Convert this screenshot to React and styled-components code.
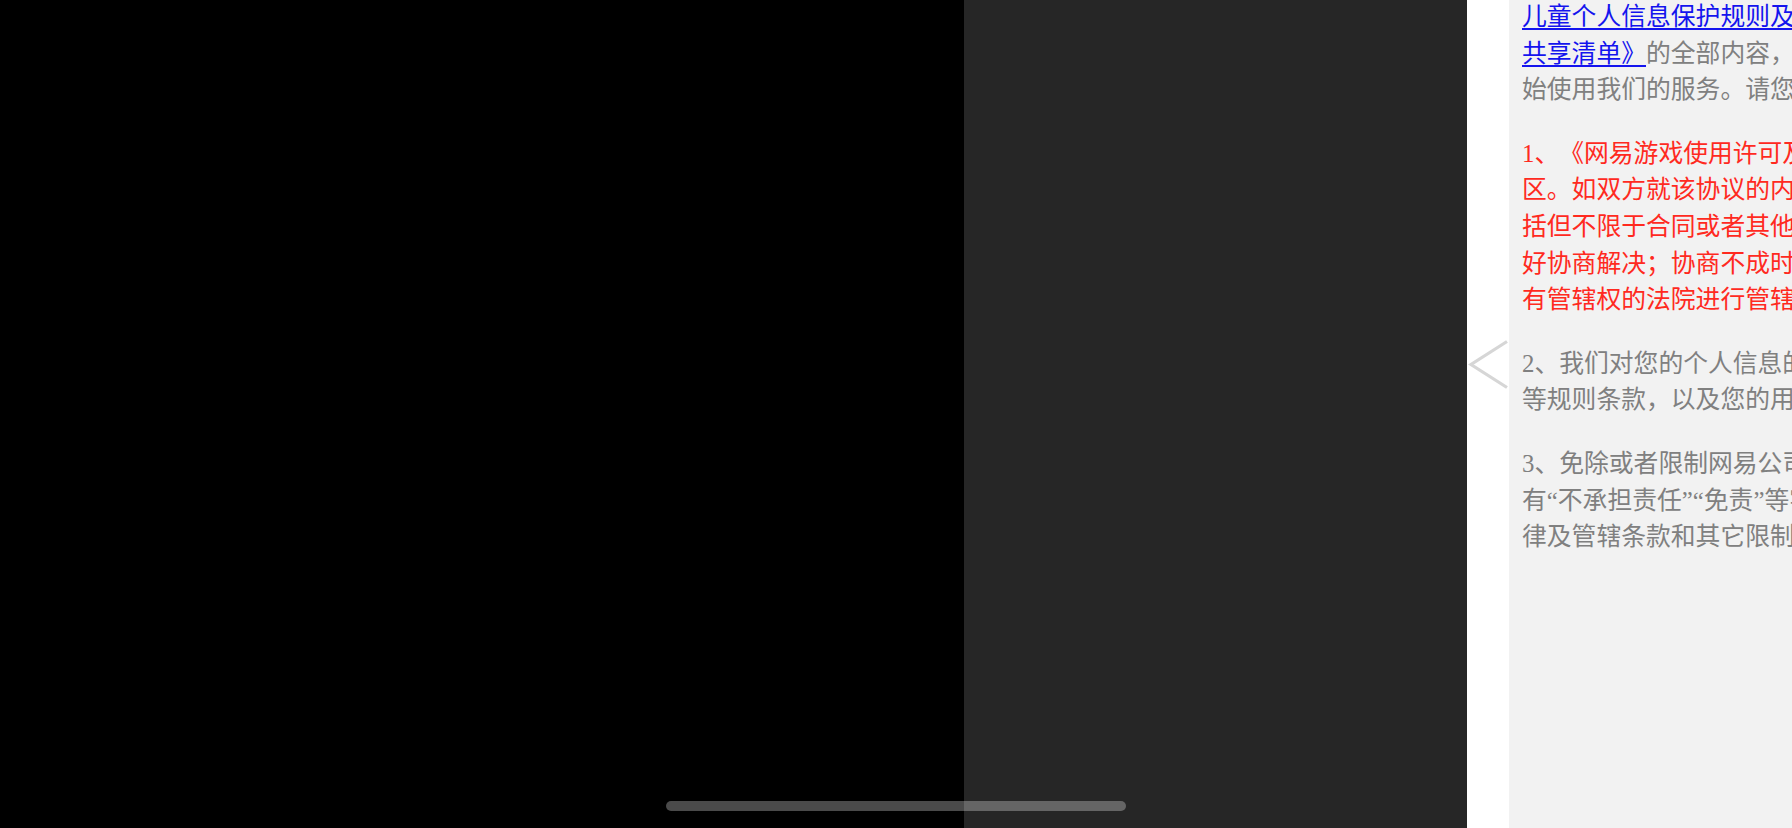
import React from "react";
import styled, { createGlobalStyle } from "styled-components";

const GlobalStyle = createGlobalStyle`
  html, body {
    margin: 0;
    padding: 0;
    width: 100%;
    height: 100%;
    overflow: hidden;
    background: #000;
  }
  #root {
    height: 100%;
  }
`;

const Screen = styled.div`
  position: relative;
  display: flex;
  width: 1792px;
  height: 828px;
  overflow: hidden;
`;

const BlackPane = styled.div`
  flex: 0 0 964px;
  background: #000;
`;

const DarkPane = styled.div`
  flex: 0 0 503px;
  background: #262626;
`;

const Gutter = styled.div`
  flex: 0 0 42px;
  background: #fff;
  display: flex;
  flex-direction: column;
  align-items: center;
  padding-top: 340px;
  box-sizing: border-box;
`;

const Sheet = styled.div`
  flex: 1 0 auto;
  background: #f2f2f2;
  padding: 0 0 0 13px;
  margin-top: -1px;
  font-family: "Liberation Serif", "Noto Sans CJK SC", sans-serif;
  font-size: 24.8px;
  line-height: 36.6px;
  color: #808080;
  white-space: nowrap;
  text-spacing-trim: space-all;
`;

const Para = styled.p`
  margin: 0 0 27px 0;
  color: ${(p) => (p.$warn ? "#ff2a1f" : "#808080")};
`;

const Link = styled.a`
  color: #1414ee;
  text-decoration: underline;
  text-decoration-thickness: 1.5px;
  text-underline-offset: 3px;
`;

const HomeBar = styled.div`
  position: absolute;
  left: 666px;
  top: 801px;
  width: 460px;
  height: 10px;
  border-radius: 5px;
  background: rgba(255, 255, 255, 0.29);
`;

const Chevron = () => (
  <svg width="41" height="50" viewBox="0 0 41 50" fill="none">
    <path d="M39 1.5 L3 24.5 L39 47.5" stroke="#d6d6d6" strokeWidth="3.2" />
  </svg>
);

const App = () => (
  <>
    <GlobalStyle />
    <Screen>
      <BlackPane />
      <DarkPane />
      <Gutter>
        <Chevron />
      </Gutter>
      <Sheet>
        <Para>
          <Link href="#">儿童个人信息保护规则及监护人须知》、《第三方信息</Link>
          <br />
          <Link href="#">共享清单》</Link>的全部内容，在确认充分理解并同意后再开
          <br />
          始使用我们的服务。请您特别注意以下内容：
        </Para>
        <Para $warn>
          1、《网易游戏使用许可及服务协议》的签订地为中国广东省广州市天河
          <br />
          区。如双方就该协议的内容或其执行发生任何争议（包
          <br />
          括但不限于合同或者其他财产性权益纠纷），双方应友
          <br />
          好协商解决；协商不成时，双方同意交由协议签订地
          <br />
          有管辖权的法院进行管辖。
        </Para>
        <Para>
          2、我们对您的个人信息的收集/保存/使用/对外提供/保护
          <br />
          等规则条款，以及您的用户权利等条款；
        </Para>
        <Para>
          3、免除或者限制网易公司责任或者限制您权利的条款（如含
          <br />
          有“不承担责任”“免责”等字样的条款）、争议解决方式、法
          <br />
          律及管辖条款和其它限制条款。
        </Para>
      </Sheet>
      <HomeBar />
    </Screen>
  </>
);

export default App;
